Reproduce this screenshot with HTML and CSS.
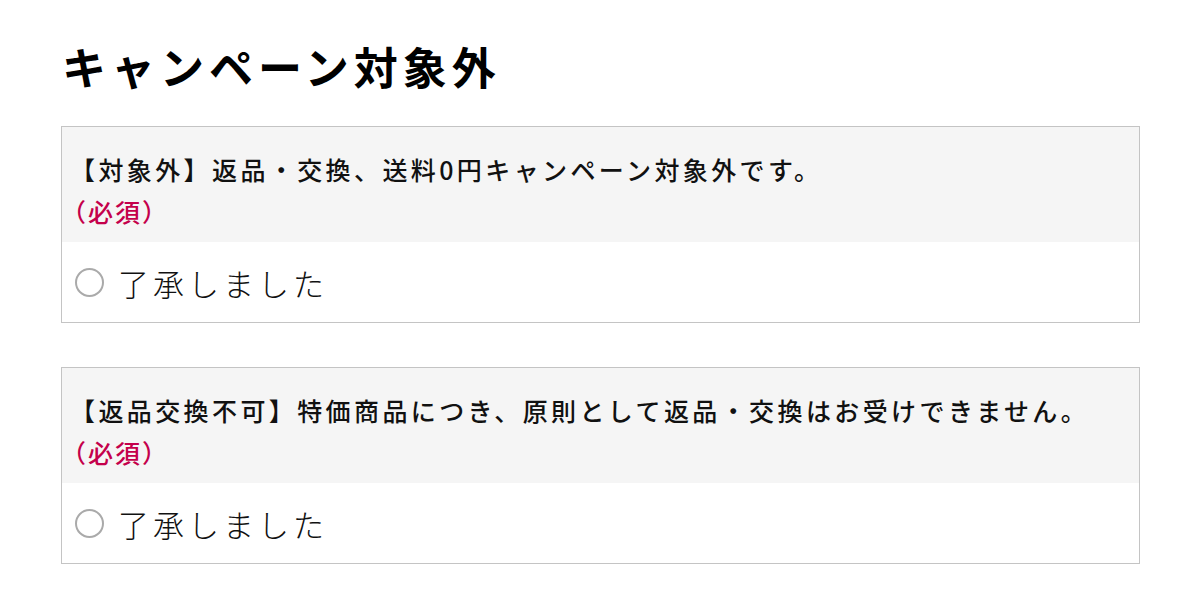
FILE: index.html
```html
<!DOCTYPE html>
<html lang="ja">
<head>
<meta charset="utf-8">
<link rel="stylesheet" href="styles.css">
</head>
<body>
<main class="page">
  <h1 class="title">キャンペーン対象外</h1>
  <section class="box">
    <div class="box-head">
      <p class="question">【対象外】返品・交換、送料0円キャンペーン対象外です。</p>
      <p class="required">（必須）</p>
    </div>
    <label class="option">
      <span class="radio"></span>
      <span class="option-text">了承しました</span>
    </label>
  </section>
  <section class="box">
    <div class="box-head">
      <p class="question">【返品交換不可】特価商品につき、原則として返品・交換はお受けできません。</p>
      <p class="required">（必須）</p>
    </div>
    <label class="option">
      <span class="radio"></span>
      <span class="option-text">了承しました</span>
    </label>
  </section>
</main>
</body>
</html>
```
FILE: styles.css
```css
* { box-sizing: border-box; }
html, body { margin: 0; padding: 0; background: #fff; }
body {
  font-family: "Noto Sans CJK JP", "Noto Sans", sans-serif;
  color: #111;
}
.page {
  padding: 35px 61px 0 61px;
  width: 1200px;
}
.title {
  margin: 0 0 29px 0;
  padding-left: 1px;
  font-size: 44px;
  line-height: 62px;
  font-weight: 700;
  letter-spacing: 5px;
  color: #000;
}
.box {
  border: 1px solid #c4c4c4;
  width: 1079px;
  margin-bottom: 44px;
}
.box-head {
  background: #f5f5f5;
  padding: 21px 8px 10px 8px;
}
.question, .required {
  margin: 0;
  font-size: 25px;
  line-height: 42px;
  font-weight: 500;
  letter-spacing: 3.4px;
  white-space: nowrap;
}
.question { color: #111; }
.required {
  color: #c4004b;
  margin-left: -9px;
  letter-spacing: 2px;
}
.option {
  display: flex;
  align-items: center;
  height: 80px;
  padding-left: 13px;
  gap: 14px;
}
.radio {
  width: 29px;
  height: 29px;
  border: 2px solid #aaa;
  border-radius: 50%;
  flex: none;
}
.option-text {
  font-size: 31px;
  font-weight: 300;
  letter-spacing: 4px;
  color: #111;
}
```
